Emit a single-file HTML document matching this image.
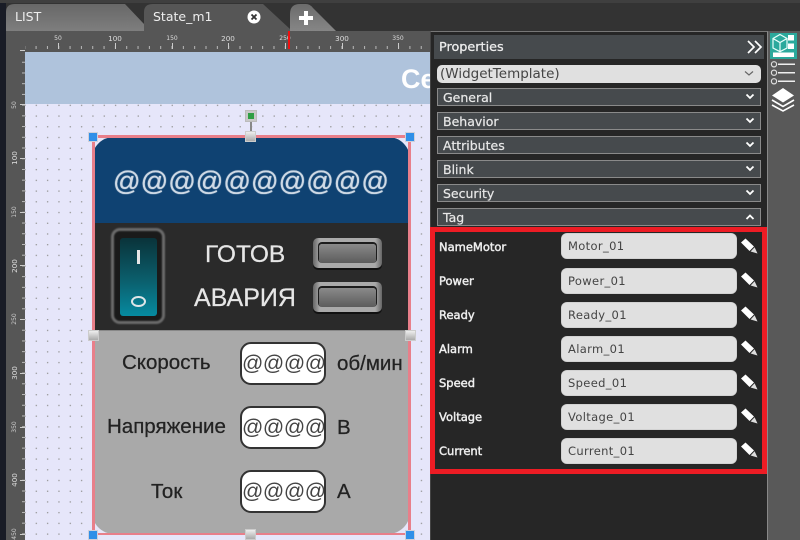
<!DOCTYPE html>
<html><head><meta charset="utf-8">
<style>
html,body{margin:0;padding:0;background:#2f2f2f;}
#r{position:relative;width:800px;height:540px;overflow:hidden;background:#333;font-family:"DejaVu Sans","Liberation Sans",sans-serif;}
#r div,#r span,#r svg{position:absolute;display:block;box-sizing:border-box;white-space:nowrap;}
.soft{filter:blur(.35px);}
.sec{left:437px;width:324px;height:18px;background:#464a4d;border:1px solid #8a8a8a;color:#e8e8e8;font-size:12.5px;line-height:17px;padding-left:5px;-webkit-text-stroke:.2px #e8e8e8;}
.sec svg{right:5px;top:4px;}
.lb{left:439px;color:#eee;font-size:11.5px;height:14px;line-height:16px;-webkit-text-stroke:.45px #eee;}
.in{left:561px;width:176px;height:26px;background:#e0e0e0;border-radius:6px;color:#444;font-size:11.5px;line-height:27px;padding-left:7px;letter-spacing:.35px;box-shadow:inset 0 0 1px #888;}
.pen{left:739.5px;width:18px;height:18px;}
.w{font-family:"Liberation Sans",sans-serif;}
.hb{width:10px;height:10px;background:#cfd0da;}
.hb i{position:absolute;left:1px;top:1px;width:8px;height:8px;background:#2f8fe8;display:block;}
.hg{width:11px;height:11px;background:linear-gradient(#eee,#aaa);border:1px solid #ccc;}
.box{left:240px;width:86px;height:43px;background:#fff;border:2px solid #333;border-radius:11px;color:#444;font-size:21px;line-height:39px;text-align:center;letter-spacing:-.4px;overflow:hidden;}
.t{color:#222;font-size:20.5px;line-height:24px;-webkit-text-stroke:.25px #222;}
.vl{color:#ccc;font-size:6px;transform:rotate(-90deg);line-height:8px;width:20px;text-align:center;left:5px;}
.vb{font-size:7.2px;color:#ddd;}
.hl{color:#ddd;font-size:6px;top:34.5px;line-height:8px;width:24px;text-align:center;}
.hb2{font-size:7.2px;}
.mh{top:43px;width:1px;height:6px;background:#ccc;}
.mv{left:20px;width:5px;height:1px;background:#ccc;}
.led{left:313px;width:69px;height:32px;background:#111;border-radius:5px;}
.led div{left:0;top:0;width:69px;height:30px;border-radius:5px;background:linear-gradient(90deg,#666,#aaa 10%,#aaa 90%,#666);}
.led span{left:6px;top:6px;width:57px;height:19px;border-radius:3px;background:linear-gradient(#8a8a8a,#5c5c5c);box-shadow:0 -1px 0 1px #1c1c1c;}
</style></head>
<body><div id="r">

<!-- top + tabs -->
<div style="left:0;top:0;width:800px;height:3px;background:#3f3f3f"></div>
<div style="left:0;top:3px;width:6px;height:537px;background:#191c26"></div>
<svg class="soft" style="left:0;top:0" width="430" height="32" viewBox="0 0 430 32">
<defs>
<linearGradient id="g1" x1="0" y1="0" x2="0" y2="1"><stop offset="0" stop-color="#686868"/><stop offset="1" stop-color="#7e7e7e"/></linearGradient>
<linearGradient id="g3" x1="0" y1="0" x2="0" y2="1"><stop offset="0" stop-color="#6c6c6c"/><stop offset="1" stop-color="#868686"/></linearGradient>
</defs>
<path d="M6 31V12Q6 4 15 4H125L144 24V31Z" fill="url(#g1)"/>
<path d="M144 31V12Q144 4 153 4H263L290 29V31Z" fill="#565656"/>
<path d="M290 31V14Q290 4 300 4H306Q310 4 313 8L336 31Z" fill="url(#g3)"/>
<path d="M306 11V25M299 18H313" stroke="#fff" stroke-width="4"/>
<circle cx="254" cy="17" r="6.5" fill="#fff"/>
<path d="M251.5 14.5L256.5 19.5M256.5 14.5L251.5 19.5" stroke="#333" stroke-width="1.8"/>
</svg>
<div class="soft" style="left:15px;top:9px;color:#eee;font-size:12.5px;line-height:16px">LIST</div>
<div class="soft" style="left:153px;top:9px;color:#eee;font-size:12.5px;line-height:16px">State_m1</div>

<!-- rulers -->
<div style="left:6px;top:31px;width:424px;height:21px;background:#565656"></div>
<div style="left:6px;top:31px;width:19px;height:509px;background:#565656"></div>
<div class="soft" style="left:25px;top:46px;width:405px;height:3px;background-image:linear-gradient(90deg,#bbb 0,#bbb 1px,transparent 1px);background-size:11.333px 100%;background-position:10.6px 0"></div>
<div class="soft" style="left:22px;top:52px;width:3px;height:488px;background-image:linear-gradient(180deg,#bbb 0,#bbb 1px,transparent 1px);background-size:100% 10.733px;background-position:0 9.77px"></div>
<div class="mh" style="left:58px"></div>
<div class="mh" style="left:115px"></div>
<div class="mh" style="left:172px"></div>
<div class="mh" style="left:228px"></div>
<div class="mh" style="left:285px"></div>
<div class="mh" style="left:342px"></div>
<div class="mh" style="left:398px"></div>
<div class="mv" style="top:50px"></div>
<div class="mv" style="top:104px"></div>
<div class="mv" style="top:158px"></div>
<div class="mv" style="top:212px"></div>
<div class="mv" style="top:265px"></div>
<div class="mv" style="top:319px"></div>
<div class="mv" style="top:373px"></div>
<div class="mv" style="top:427px"></div>
<div class="mv" style="top:480px"></div>
<div class="mv" style="top:534px"></div>
<div class="hl" style="left:46px">50</div>
<div class="hl hb2" style="left:103px">100</div>
<div class="hl" style="left:160px">150</div>
<div class="hl hb2" style="left:216px">200</div>
<div class="hl" style="left:273px">250</div>
<div class="hl hb2" style="left:330px">300</div>
<div class="hl" style="left:386px">350</div>
<div style="left:288px;top:31px;width:1.5px;height:18px;background:#f01010"></div>
<div class="vl" style="top:100.7px">50</div>
<div class="vl vb" style="top:154.4px">100</div>
<div class="vl" style="top:208px">150</div>
<div class="vl vb" style="top:261.7px">200</div>
<div class="vl" style="top:315.4px">250</div>
<div class="vl vb" style="top:369px">300</div>
<div class="vl" style="top:422.7px">350</div>
<div class="vl vb" style="top:476.4px">400</div>
<div class="vl" style="top:530px">450</div>

<!-- canvas -->
<div class="soft" style="left:25px;top:52px;width:405px;height:488px;background-color:#e6e6fa;background-image:radial-gradient(circle at .7px .7px,#888 0,#999 .5px,transparent .9px);background-size:11.333px 10.733px;background-position:10.6px 9.77px"></div>
<div style="left:25px;top:52px;width:405px;height:52px;background:#afc3dc;overflow:hidden">
<span class="w" style="left:376px;top:10px;color:#fff;font-size:27px;font-weight:bold;line-height:34px">Се</span>
</div>

<!-- widget -->
<div class="soft w" style="left:92px;top:137px;width:318px;height:397px;border-radius:22px;background:#a9a9a9;overflow:hidden">
<div style="left:0;top:0;width:318px;height:86px;background:#0f4272"></div>
<div style="left:0;top:86px;width:318px;height:107px;background:#2a2a2a"></div>
<div style="left:0;top:193px;width:318px;height:1px;background:#888"></div>
</div>
<div class="w soft" style="left:92px;top:163px;width:318px;height:36px;text-align:center;font-size:27.2px;line-height:36px;color:#cfdae6;text-shadow:0 0 1px #fff">@@@@@@@@@@</div>

<div style="left:111px;top:228px;width:54px;height:96px;border-radius:9px;background:#1a1a1a;border:3.5px solid #6b6b6b;filter:blur(.7px)"></div>
<div class="soft" style="left:120px;top:238px;width:37px;height:78px;border-radius:3px;background:linear-gradient(#0a333a,#0b5f6d 55%,#068aa0)"></div>
<div class="soft" style="left:137px;top:250px;width:3px;height:14px;background:#e6e6e6"></div>
<div class="soft" style="left:131px;top:296px;width:15px;height:11px;border:2.5px solid #dfe6e8;border-radius:50%"></div>

<div class="w soft" style="left:205px;top:240px;color:#e6e6e6;font-size:24.5px;line-height:30px;-webkit-text-stroke:.25px #e6e6e6">ГОТОВ</div>
<div class="w soft" style="left:194px;top:283px;color:#e6e6e6;font-size:25px;line-height:30px;-webkit-text-stroke:.25px #e6e6e6">АВАРИЯ</div>
<div class="led soft" style="top:238px"><div></div><span></span></div>
<div class="led soft" style="top:282px"><div></div><span></span></div>

<div class="w t soft" style="left:122px;top:351px">Скорость</div>
<div class="w t soft" style="left:107px;top:415px">Напряжение</div>
<div class="w t soft" style="left:151px;top:480px">Ток</div>
<div class="w box soft" style="top:342px">@@@@</div>
<div class="w box soft" style="top:406px">@@@@</div>
<div class="w box soft" style="top:470px">@@@@</div>
<div class="w t soft" style="left:337px;top:352px">об/мин</div>
<div class="w t soft" style="left:337px;top:416px">В</div>
<div class="w t soft" style="left:337px;top:480px">А</div>

<!-- selection -->
<div class="soft" style="left:92px;top:135px;width:319px;height:400px;border:3px solid #e87f8a;border-bottom-width:2.5px"></div>
<div style="left:250px;top:121px;width:2px;height:11px;background:#888"></div>
<div class="soft" style="left:245px;top:110px;width:12px;height:12px;background:#c8c8c8;border:1px solid #bbb"></div>
<div style="left:248px;top:113px;width:6px;height:6px;background:#2f9e44"></div>
<div class="hb soft" style="left:88px;top:132px"><i></i></div>
<div class="hb soft" style="left:405px;top:132px"><i></i></div>
<div class="hb soft" style="left:88px;top:530px"><i></i></div>
<div class="hb soft" style="left:405px;top:530px"><i></i></div>
<div class="hg soft" style="left:245px;top:131px"></div>
<div class="hg soft" style="left:88px;top:330px"></div>
<div class="hg soft" style="left:405px;top:330px"></div>
<div class="hg soft" style="left:245px;top:529px"></div>

<!-- properties panel -->
<div style="left:430px;top:31px;width:338px;height:509px;background:#262626;border-top:1px solid #777;border-left:1px solid #444;border-right:1px solid #888"></div>
<div style="left:768px;top:31px;width:32px;height:509px;background:#595959"></div>
<div style="left:434px;top:35px;width:330px;height:24px;background:#464a4d"></div>
<div class="soft" style="left:439px;top:40px;color:#eee;font-size:12.8px;line-height:16px;-webkit-text-stroke:.25px #eee">Properties</div>
<svg style="left:747px;top:40px" width="18" height="14" viewBox="0 0 18 14"><path d="M1 1L7 7L1 13M8 1L14 7L8 13" fill="none" stroke="#fff" stroke-width="1.7"/></svg>
<div class="soft" style="left:437px;top:65px;width:324px;height:18px;background:#e0e0e0;border-radius:5px;color:#444;font-size:13.5px;line-height:18px;padding-left:3px">(WidgetTemplate)</div>
<svg style="left:744px;top:70px" width="10" height="7" viewBox="0 0 10 7"><path d="M1 1.5L5 5L9 1.5" fill="none" stroke="#666" stroke-width="1.2"/></svg>

<div class="sec" style="top:88px">General<svg width="10" height="8" viewBox="0 0 10 8"><path d="M1.5 1.5L5 5L8.5 1.5" fill="none" stroke="#fff" stroke-width="1.8"/></svg></div>
<div class="sec" style="top:112px">Behavior<svg width="10" height="8" viewBox="0 0 10 8"><path d="M1.5 1.5L5 5L8.5 1.5" fill="none" stroke="#fff" stroke-width="1.8"/></svg></div>
<div class="sec" style="top:136px">Attributes<svg width="10" height="8" viewBox="0 0 10 8"><path d="M1.5 1.5L5 5L8.5 1.5" fill="none" stroke="#fff" stroke-width="1.8"/></svg></div>
<div class="sec" style="top:160px">Blink<svg width="10" height="8" viewBox="0 0 10 8"><path d="M1.5 1.5L5 5L8.5 1.5" fill="none" stroke="#fff" stroke-width="1.8"/></svg></div>
<div class="sec" style="top:184px">Security<svg width="10" height="8" viewBox="0 0 10 8"><path d="M1.5 1.5L5 5L8.5 1.5" fill="none" stroke="#fff" stroke-width="1.8"/></svg></div>
<div class="sec" style="top:208px">Tag<svg width="10" height="8" viewBox="0 0 10 8"><path d="M1.5 6L5 2.5L8.5 6" fill="none" stroke="#fff" stroke-width="1.8"/></svg></div>

<div style="left:430px;top:227px;width:337px;height:247px;border:5px solid #ed1c24"></div>

<div class="lb" style="top:239px">NameMotor</div><div class="in" style="top:233px">Motor_01</div>
<div class="lb" style="top:273px">Power</div><div class="in" style="top:267.5px">Power_01</div>
<div class="lb" style="top:307px">Ready</div><div class="in" style="top:301.5px">Ready_01</div>
<div class="lb" style="top:341px">Alarm</div><div class="in" style="top:335.5px">Alarm_01</div>
<div class="lb" style="top:375px">Speed</div><div class="in" style="top:369.5px">Speed_01</div>
<div class="lb" style="top:409px">Voltage</div><div class="in" style="top:403.5px">Voltage_01</div>
<div class="lb" style="top:443px">Current</div><div class="in" style="top:438px">Current_01</div>

<svg class="pen" style="top:237px" viewBox="0 0 18 18"><path d="M1 5.5L5.5 1.5L14 9.5L9.5 14Z" fill="#fff"/><path d="M10.6 14.5L14.6 10.3L17.5 16.5Z" fill="#ddd"/></svg>
<svg class="pen" style="top:271px" viewBox="0 0 18 18"><path d="M1 5.5L5.5 1.5L14 9.5L9.5 14Z" fill="#fff"/><path d="M10.6 14.5L14.6 10.3L17.5 16.5Z" fill="#ddd"/></svg>
<svg class="pen" style="top:305px" viewBox="0 0 18 18"><path d="M1 5.5L5.5 1.5L14 9.5L9.5 14Z" fill="#fff"/><path d="M10.6 14.5L14.6 10.3L17.5 16.5Z" fill="#ddd"/></svg>
<svg class="pen" style="top:339px" viewBox="0 0 18 18"><path d="M1 5.5L5.5 1.5L14 9.5L9.5 14Z" fill="#fff"/><path d="M10.6 14.5L14.6 10.3L17.5 16.5Z" fill="#ddd"/></svg>
<svg class="pen" style="top:373px" viewBox="0 0 18 18"><path d="M1 5.5L5.5 1.5L14 9.5L9.5 14Z" fill="#fff"/><path d="M10.6 14.5L14.6 10.3L17.5 16.5Z" fill="#ddd"/></svg>
<svg class="pen" style="top:407px" viewBox="0 0 18 18"><path d="M1 5.5L5.5 1.5L14 9.5L9.5 14Z" fill="#fff"/><path d="M10.6 14.5L14.6 10.3L17.5 16.5Z" fill="#ddd"/></svg>
<svg class="pen" style="top:441px" viewBox="0 0 18 18"><path d="M1 5.5L5.5 1.5L14 9.5L9.5 14Z" fill="#fff"/><path d="M10.6 14.5L14.6 10.3L17.5 16.5Z" fill="#ddd"/></svg>

<!-- sidebar icons -->
<svg class="soft" style="left:768px;top:31px" width="32" height="84" viewBox="0 0 32 84">
<rect x="2" y="2" width="27" height="26" fill="#2ba99c"/>
<path d="M12 3.5L19 7.5V17L12 20.7L5 17V7.5ZM5 7.5L12 11.5L19 7.5M12 11.5V20.7" fill="none" stroke="#e8fffb" stroke-width="1.2"/>
<rect x="20" y="4" width="6" height="5.5" fill="#fff"/>
<rect x="20" y="12.5" width="6" height="5.5" fill="#fff"/>
<rect x="5" y="21.5" width="21" height="4.5" fill="#fff"/>
<circle cx="6" cy="33.3" r="2.6" fill="none" stroke="#ddd" stroke-width="1.2"/>
<path d="M10 33.3H27" stroke="#eee" stroke-width="1.5"/>
<circle cx="6" cy="41.7" r="2.6" fill="none" stroke="#ddd" stroke-width="1.2"/>
<path d="M10 41.7H27" stroke="#eee" stroke-width="1.5"/>
<circle cx="6" cy="50.3" r="2.6" fill="none" stroke="#ddd" stroke-width="1.2"/>
<path d="M10 50.3H27" stroke="#eee" stroke-width="1.5"/>
<path d="M15 57L26 64.5L15 71.5L4 64.5Z" fill="#fff"/>
<path d="M4 69L15 75.5L26 69M4 74L15 80L26 74" fill="none" stroke="#fff" stroke-width="1.6"/>
</svg>

</div></body></html>
